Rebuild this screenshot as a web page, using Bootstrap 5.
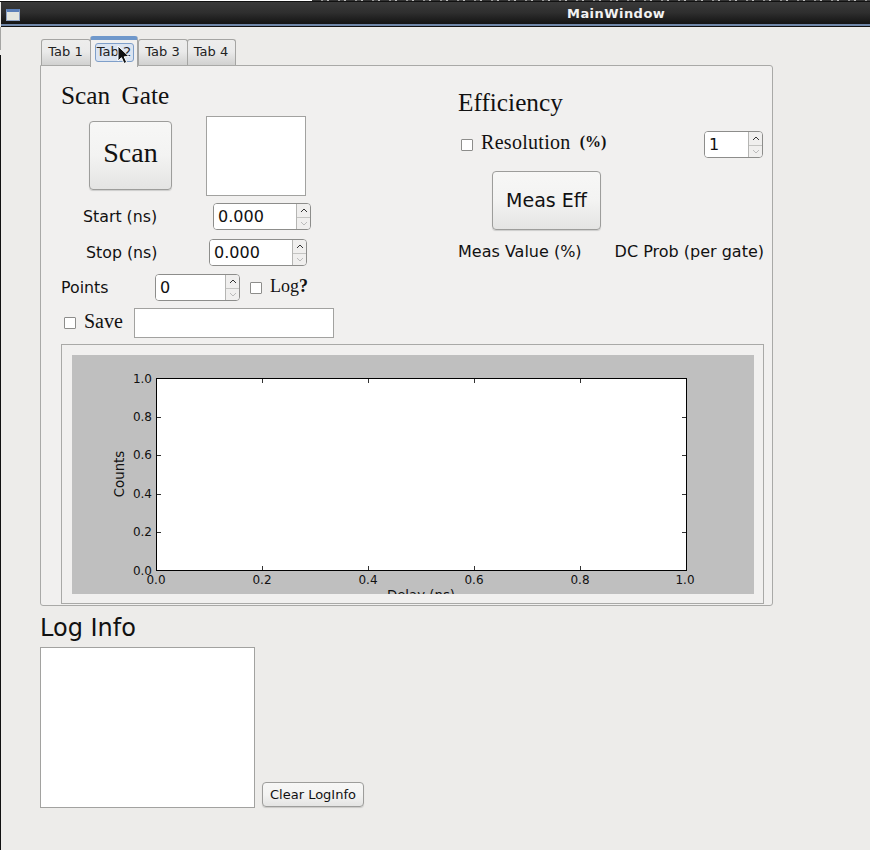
<!DOCTYPE html>
<html lang="en">
<head>
    <meta charset="UTF-8">
    <meta name="viewport" content="width=device-width, initial-scale=1">
    <title>MainWindow</title>
    <link rel="stylesheet" href="https://cdn.jsdelivr.net/npm/bootstrap@5.3.0/dist/css/bootstrap.min.css">
    <style>
        html, body {
            height: 850px;
            overflow: hidden;
        }

        body {
            background-color: #edecea;
            font-family: "DejaVu Sans", sans-serif;
            color: #111;
            font-size: 15.8px;
        }

        .serif {
            font-family: "Liberation Serif", serif;
        }

        .top-strip {
            height: 2px;
            background: #fff;
            border-bottom: 1px solid #111;
        }

        .top-strip-frag {
            margin-left: 312px;
            height: 1px;
            background: repeating-linear-gradient(90deg, #333 0 9px, #999 9px 11px, #444 11px 15px, #bbb 15px 17px);
        }

        .title-bar {
            height: 25px;
            margin-left: 1px;
            background: linear-gradient(#3a3a3a, #2e2e2e 45%, #151515 88%);
            border-bottom: 1px solid #111;
            box-shadow: inset 0 -2px 0 #6f86a8;
            padding-left: 5px;
        }

        .win-icon {
            width: 14px;
            height: 12px;
            background: #e4e6df;
            border: 1px solid #8fa3c4;
            border-top: 3px solid #5c80b8;
            margin-top: 7px;
            flex: none;
        }

        .win-title {
            color: #f2f2f2;
            font-weight: 700;
            font-size: 13px;
            letter-spacing: .45px;
            padding-left: 547px;
            line-height: 24px;
        }

        .left-edge {
            position: absolute;
            left: 0;
            top: 55px;
            width: 1px;
            height: 795px;
            background: #111;
        }

        .left-edge-upper {
            position: absolute;
            left: 0;
            top: 27px;
            width: 1px;
            height: 23px;
            background: #a5a5a3;
        }

        .main-area {
            padding: 9px 0 0 40px;
            width: 773px;
            box-sizing: content-box;
        }

        .tab-strip {
            height: 29px;
            padding-left: 1px;
        }

        .qt-tab {
            width: 50px;
            height: 27px;
            margin-top: 3px;
            font-size: 13px;
            line-height: 24px;
            text-align: center;
            color: #222;
            background: linear-gradient(#ededec, #eaeaea 45%, #cfcfce);
            border: 1px solid #a5a5a3;
            border-bottom: 0;
            border-radius: 3px 3px 0 0;
            margin-right: -1px;
            padding-right: 1px;
        }

        .qt-tab-active {
            width: 48px;
            height: 31px;
            margin: 0;
            padding: 3px 0 0;
            background: #f1f0ef;
            border-color: #a5a5a3;
            border-top: 4px solid #6f98cb;
            position: relative;
            z-index: 2;
        }

        .qt-tab-last {
            width: 49px;
        }

        .tab-focus {
            width: 39px;
            height: 19px;
            margin: 0 auto;
            line-height: 16px;
            background: #dbe4f1;
            border: 1px solid #7f9fc9;
            border-radius: 3px;
        }

        .pointer {
            position: absolute;
            left: 26px;
            top: 5px;
            width: 14px;
            height: 22px;
        }

        .tab-pane-box {
            position: relative;
            width: 733px;
            height: 541px;
            background: #f1f0ef;
            border: 1px solid #a9a9a7;
            border-radius: 0 3px 3px 3px;
            padding: 0 9px 0 20px;
        }

        .col-left {
            width: 397px;
            flex: none;
        }

        .sec-title {
            font-size: 25.3px;
            line-height: 30px;
            word-spacing: 5px;
            margin-top: 14px;
        }

        .scan-row {
            height: 80px;
            margin-top: 6px;
        }

        .qt-btn {
            background: linear-gradient(#f7f7f6, #f3f3f2 50%, #e4e4e3);
            border: 1px solid #9d9d9b;
            border-radius: 4px;
            color: #111;
            padding: 0;
            box-shadow: 0 1px 1px rgba(0, 0, 0, .15);
        }

        .btn-scan {
            width: 83px;
            height: 69px;
            margin: 5px 0 0 28px;
            font-size: 28px;
            padding-bottom: 6px;
        }

        .white-box {
            background: #fff;
            border: 1px solid #a2a2a0;
        }

        .scan-box {
            width: 100px;
            height: 80px;
            margin-left: 34px;
        }

        .form-line {
            height: 27px;
        }

        .line-start { margin-top: 7px; }
        .line-stop { margin-top: 9px; }
        .line-points { margin-top: 8px; }
        .line-save { margin-top: 7px; }

        .spin {
            height: 27px;
            background: #fff;
            border: 1px solid #8d8d8b;
            border-radius: 4px;
            overflow: hidden;
        }

        .spin-value {
            flex: 1;
            font-size: 16px;
            line-height: 25px;
            padding-left: 4px;
            background: #fff;
        }

        .spin-arrows {
            width: 14px;
            flex: none;
            border-left: 1px solid #b5b5b3;
            background: #f0efee;
        }

        .spin-arrows span {
            height: 50%;
            display: flex;
            align-items: center;
            justify-content: center;
        }

        .spin-arrows span + span {
            border-top: 1px solid #c4c4c2;
        }

        .w-98 { width: 98px; }
        .w-85 { width: 85px; }
        .w-59 { width: 59px; }

        .start-label { padding-left: 22px; width: 152px; }
        .stop-label { padding-left: 25px; width: 148px; }
        .points-label { width: 94px; }

        .qt-check {
            width: 12px;
            height: 12px;
            background: #fff;
            border: 1px solid #8d8d8b;
            border-radius: 1px;
            flex: none;
            display: block;
        }

        .check-log { margin: 0 8px 0 10px; }
        .check-save, .check-res { margin-left: 3px; }

        .serif-label {
            font-size: 20px;
            line-height: 20px;
            padding-bottom: 4px;
            margin-left: 8px;
        }

        .label-log {
            font-size: 18px;
            margin-left: 0;
        }

        .label-save { width: 50px; }

        .label-res {
            letter-spacing: .3px;
            padding-bottom: 6px;
        }

        .label-pct {
            font-weight: 700;
            font-size: 16px;
            line-height: 20px;
            margin-left: 9px;
            padding-bottom: 6px;
        }

        .save-input {
            width: 200px;
            height: 30px;
        }

        .chart-frame {
            position: absolute;
            left: 20px;
            top: 278px;
            width: 703px;
            height: 260px;
            border: 1px solid #a9a9a7;
            padding: 10px;
        }

        .chart-frame svg {
            display: block;
        }

        .eff-title {
            font-size: 25.3px;
            line-height: 30px;
            margin-top: 21px;
        }

        .res-row { margin-top: 14px; }

        .log-title {
            font-size: 24px;
            line-height: 30px;
            margin-top: 7px;
            height: 34px;
        }

        .log-box {
            width: 215px;
            height: 161px;
        }

        .btn-clear {
            width: 102px;
            height: 25px;
            margin: 0 0 1px 7px;
            font-size: 13px;
            line-height: 22px;
        }

        .btn-meas {
            width: 109px;
            height: 59px;
            margin: 13px 0 0 34px;
            font-size: 19px;
        }

        .meas-labels {
            margin: 10px -1px 0 0;
            font-size: 16px;
        }
    </style>
</head>
<body>

<div class="top-strip"><div class="top-strip-frag"></div></div>
<div class="title-bar d-flex">
    <div class="win-icon"></div>
    <div class="win-title">MainWindow</div>
</div>
<div class="left-edge-upper"></div>
<div class="left-edge"></div>

<div class="main-area">
    <div class="tab-strip d-flex">
        <div class="qt-tab">Tab 1</div>
        <div class="qt-tab qt-tab-active">
            <div class="tab-focus">Tab 2</div>
            <svg class="pointer" viewBox="0 0 14 22"><path d="M1 1 L1 16 L4.5 12.7 L7 18.5 L9.7 17.3 L7.2 11.8 L12 11.5 Z" fill="#111" stroke="#fff" stroke-width="1"/></svg>
        </div>
        <div class="qt-tab">Tab 3</div>
        <div class="qt-tab qt-tab-last">Tab 4</div>
    </div>

    <div class="tab-pane-box d-flex">
        <div class="col-left">
            <div class="sec-title serif">Scan Gate</div>
            <div class="scan-row d-flex">
                <button class="qt-btn btn-scan serif" type="button">Scan</button>
                <div class="white-box scan-box"></div>
            </div>
            <div class="form-line line-start d-flex align-items-center">
                <div class="start-label">Start (ns)</div>
                <div class="spin w-98 d-flex">
                    <div class="spin-value">0.000</div>
                    <div class="spin-arrows">
                        <span><svg width="8" height="5" viewBox="0 0 8 5"><path d="M1 4 L4 1 L7 4" fill="none" stroke="#333"/></svg></span>
                        <span><svg width="8" height="5" viewBox="0 0 8 5"><path d="M1 1 L4 4 L7 1" fill="none" stroke="#bbb"/></svg></span>
                    </div>
                </div>
            </div>
            <div class="form-line line-stop d-flex align-items-center">
                <div class="stop-label">Stop (ns)</div>
                <div class="spin w-98 d-flex">
                    <div class="spin-value">0.000</div>
                    <div class="spin-arrows">
                        <span><svg width="8" height="5" viewBox="0 0 8 5"><path d="M1 4 L4 1 L7 4" fill="none" stroke="#333"/></svg></span>
                        <span><svg width="8" height="5" viewBox="0 0 8 5"><path d="M1 1 L4 4 L7 1" fill="none" stroke="#bbb"/></svg></span>
                    </div>
                </div>
            </div>
            <div class="form-line line-points d-flex align-items-center">
                <div class="points-label">Points</div>
                <div class="spin w-85 d-flex">
                    <div class="spin-value">0</div>
                    <div class="spin-arrows">
                        <span><svg width="8" height="5" viewBox="0 0 8 5"><path d="M1 4 L4 1 L7 4" fill="none" stroke="#333"/></svg></span>
                        <span><svg width="8" height="5" viewBox="0 0 8 5"><path d="M1 1 L4 4 L7 1" fill="none" stroke="#bbb"/></svg></span>
                    </div>
                </div>
                <span class="qt-check check-log"></span>
                <span class="serif serif-label label-log">Log<b>?</b></span>
            </div>
            <div class="line-save d-flex align-items-center">
                <span class="qt-check check-save"></span>
                <span class="serif serif-label label-save">Save</span>
                <div class="white-box save-input"></div>
            </div>
        </div>

        <div class="flex-grow-1">
            <div class="eff-title serif">Efficiency</div>
            <div class="res-row d-flex align-items-center">
                <span class="qt-check check-res"></span>
                <span class="serif serif-label label-res">Resolution</span>
                <span class="serif label-pct">(%)</span>
                <div class="spin w-59 d-flex ms-auto">
                    <div class="spin-value">1</div>
                    <div class="spin-arrows">
                        <span><svg width="8" height="5" viewBox="0 0 8 5"><path d="M1 4 L4 1 L7 4" fill="none" stroke="#333"/></svg></span>
                        <span><svg width="8" height="5" viewBox="0 0 8 5"><path d="M1 1 L4 4 L7 1" fill="none" stroke="#bbb"/></svg></span>
                    </div>
                </div>
            </div>
            <button class="qt-btn btn-meas" type="button">Meas Eff</button>
            <div class="meas-labels d-flex justify-content-between text-nowrap">
                <span>Meas Value (%)</span>
                <span>DC Prob (per gate)</span>
            </div>
        </div>

        <div class="chart-frame">
            <svg width="682" height="239" viewBox="0 0 682 239" font-family="DejaVu Sans" font-size="12" fill="#111">
                <rect width="682" height="239" fill="#bfbfbf"/>
                <rect x="84.5" y="23.5" width="530" height="192" fill="#fff" stroke="#000"/>
                <g stroke="#333">
                    <path d="M190.5 24v4M296.5 24v4M402.5 24v4M508.5 24v4M190.5 215v-4M296.5 215v-4M402.5 215v-4M508.5 215v-4"/>
                    <path d="M85 62.5h4M85 100.5h4M85 139.5h4M85 177.5h4M614 62.5h-4M614 100.5h-4M614 139.5h-4M614 177.5h-4"/>
                </g>
                <g text-anchor="end">
                    <text x="80" y="28">1.0</text>
                    <text x="80" y="66">0.8</text>
                    <text x="80" y="104">0.6</text>
                    <text x="80" y="143">0.4</text>
                    <text x="80" y="181">0.2</text>
                    <text x="80" y="220">0.0</text>
                </g>
                <g text-anchor="middle">
                    <text x="84" y="229">0.0</text>
                    <text x="190" y="229">0.2</text>
                    <text x="296" y="229">0.4</text>
                    <text x="402" y="229">0.6</text>
                    <text x="508" y="229">0.8</text>
                    <text x="613" y="229">1.0</text>
                    <text x="349" y="245" font-size="13.3">Delay (ns)</text>
                    <text transform="translate(52 119) rotate(-90)" font-size="13.3">Counts</text>
                </g>
            </svg>
        </div>
    </div>

    <div class="log-title">Log Info</div>
    <div class="d-flex align-items-end">
        <div class="white-box log-box"></div>
        <button class="qt-btn btn-clear" type="button">Clear LogInfo</button>
    </div>
</div>

<script src="https://cdn.jsdelivr.net/npm/bootstrap@5.3.0/dist/js/bootstrap.bundle.min.js"></script>
</body>
</html>
